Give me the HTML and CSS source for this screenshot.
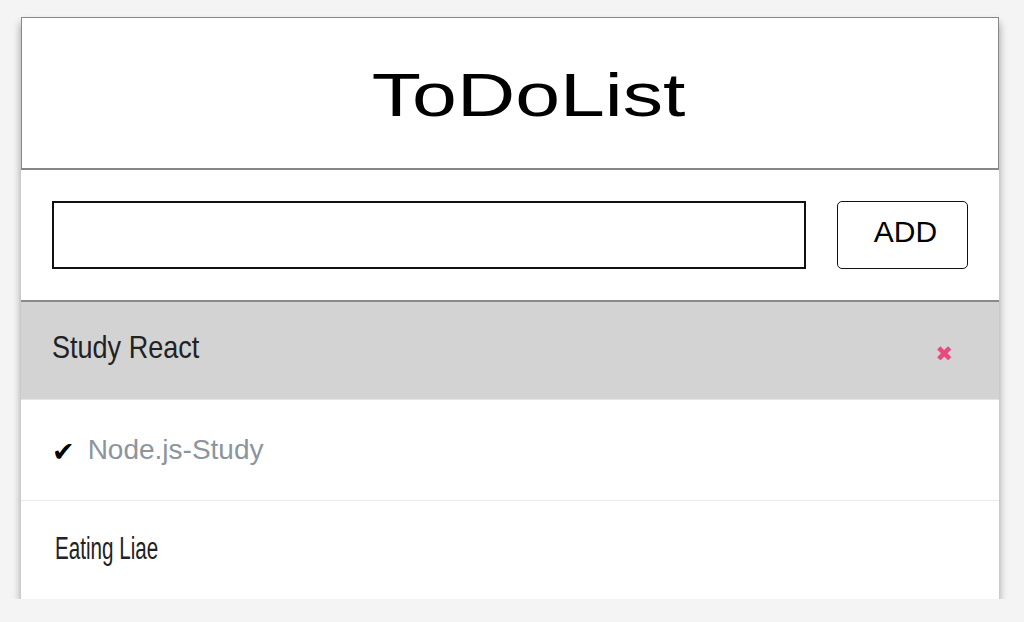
FILE: index.html
```html
<!DOCTYPE html>
<html>
<head>
<meta charset="utf-8">
<link rel="stylesheet" href="styles.css">
</head>
<body>
<div class="card">
  <header class="head"><h1 class="title">ToDoList</h1></header>
  <div class="entry">
    <input class="field" type="text">
    <button class="add">ADD</button>
  </div>
  <ul class="list">
    <li class="item active"><span class="label"><span class="narrow">Study React</span></span><span class="del">✖</span></li>
    <li class="item done"><span class="check">✔</span><span class="label">Node.js-Study</span></li>
    <li class="item"><span class="label"><span class="narrow squeeze">Eating Liae</span></span></li>
  </ul>
</div>
</body>
</html>
```

FILE: styles.css
```css
html, body { margin: 0; padding: 0; }
body { background: #f4f4f4; font-family: "Liberation Sans", Arial, sans-serif; }
.card {
  width: 978px;
  margin: 17px 0 0 21px;
  background: #fff;
  box-shadow: 0 6px 8px rgba(0,0,0,0.38);
}
.head {
  height: 150px;
  border: 1px solid #878787;
  border-bottom: 2px solid #878787;
  display: flex;
  align-items: center;
  justify-content: center;
  padding-left: 38px;
}
.title {
  margin: 0;
  font-weight: normal;
  font-size: 62px;
  color: #000;
  display: inline-block;
  transform: scaleX(1.3);
  line-height: 1;
  padding-top: 4px;
}
.entry {
  display: flex;
  gap: 31px;
  padding: 31px;
  border-bottom: 2px solid #8a8a8a;
}
.field {
  flex: 1;
  height: 68px;
  box-sizing: border-box;
  border: 2px solid #111;
  margin: 0;
  padding: 0;
  background: #fff;
}
.add {
  width: 131px;
  height: 68px;
  box-sizing: border-box;
  border: 1.5px solid #111;
  border-radius: 5px;
  background: #fff;
  font-family: "Liberation Sans", Arial, sans-serif;
  font-size: 30px;
  color: #000;
  padding: 0 0 6px 6px;
  margin: 0;
}
.list { list-style: none; margin: 0; padding: 0; }
.item {
  height: 98px;
  display: flex;
  align-items: center;
  padding: 0 31px;
  border-bottom: 1px solid #ececec;
  font-size: 28px;
  color: #222;
}
.item:last-child { border-bottom: 0; }
.item.active { background: #d3d3d3; height: 97px; border-bottom: 1px solid #e4e4e4; }
.item.done { height: 100px; }
.label { flex: 1; }
.narrow {
  display: inline-block;
  font-size: 32px;
  transform: scaleX(0.845);
  transform-origin: left center;
}
.squeeze {
  font-size: 31px;
  transform: scaleX(0.665);
  margin-top: -4px;
  margin-left: 3px;
}
.item.active .label { margin-top: -6px; }
.done .label { color: #8c959d; }
.check {
  font-family: "DejaVu Sans", sans-serif;
  font-size: 27px;
  color: #000;
  margin-right: 13px;
  margin-top: 3px;
}
.del {
  font-family: "DejaVu Sans", sans-serif;
  color: #e84a7f;
  font-size: 21px;
  margin-right: 15px;
  margin-top: 6px;
}
```
